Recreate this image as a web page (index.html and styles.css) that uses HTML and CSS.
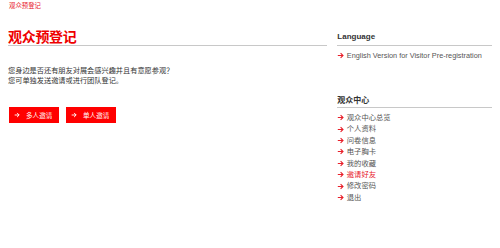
FILE: index.html
```html
<!DOCTYPE html>
<html lang="zh-CN">
<head>
  <meta charset="UTF-8">
  <title>观众预登记</title>
  <link rel="stylesheet" href="styles.css">
</head>
<body>
  <div class="crumb"><a href="#">观众预登记</a></div>
  <div class="layout">
    <div class="main">
      <h1>观众预登记</h1>
      <p class="intro">您身边是否还有朋友对展会感兴趣并且有意愿参观？<br>您可单独发送邀请或进行团队登记。</p>
      <div class="actions">
        <a class="btn" href="#"><svg viewBox="0 0 7 7"><path d="M0.8 3.5h5.2M3.6 1.1l2.4 2.4-2.4 2.4"/></svg>多人邀请</a>
        <a class="btn" href="#"><svg viewBox="0 0 7 7"><path d="M0.8 3.5h5.2M3.6 1.1l2.4 2.4-2.4 2.4"/></svg>单人邀请</a>
      </div>
    </div>
    <div class="side">
      <h3>Language</h3>
      <ul class="links">
        <li><a href="#"><svg viewBox="0 0 7 7"><path d="M0.8 3.5h5.2M3.6 1.1l2.4 2.4-2.4 2.4"/></svg>English Version for Visitor Pre-registration</a></li>
      </ul>
      <h3 class="second">观众中心</h3>
      <ul class="links menu">
        <li><a href="#"><svg viewBox="0 0 7 7"><path d="M0.8 3.5h5.2M3.6 1.1l2.4 2.4-2.4 2.4"/></svg>观众中心总览</a></li>
        <li><a href="#"><svg viewBox="0 0 7 7"><path d="M0.8 3.5h5.2M3.6 1.1l2.4 2.4-2.4 2.4"/></svg>个人资料</a></li>
        <li><a href="#"><svg viewBox="0 0 7 7"><path d="M0.8 3.5h5.2M3.6 1.1l2.4 2.4-2.4 2.4"/></svg>问卷信息</a></li>
        <li><a href="#"><svg viewBox="0 0 7 7"><path d="M0.8 3.5h5.2M3.6 1.1l2.4 2.4-2.4 2.4"/></svg>电子胸卡</a></li>
        <li><a href="#"><svg viewBox="0 0 7 7"><path d="M0.8 3.5h5.2M3.6 1.1l2.4 2.4-2.4 2.4"/></svg>我的收藏</a></li>
        <li class="active"><a href="#"><svg viewBox="0 0 7 7"><path d="M0.8 3.5h5.2M3.6 1.1l2.4 2.4-2.4 2.4"/></svg>邀请好友</a></li>
        <li><a href="#"><svg viewBox="0 0 7 7"><path d="M0.8 3.5h5.2M3.6 1.1l2.4 2.4-2.4 2.4"/></svg>修改密码</a></li>
        <li><a href="#"><svg viewBox="0 0 7 7"><path d="M0.8 3.5h5.2M3.6 1.1l2.4 2.4-2.4 2.4"/></svg>退出</a></li>
      </ul>
    </div>
  </div>
</body>
</html>
```

FILE: styles.css
```css
body {
  margin: 0;
  padding: 0 8px;
  font-family: "Liberation Sans", "Noto Sans CJK SC", sans-serif;
  color: #444;
  background: #fff;
}
a {
  text-decoration: none;
}
.crumb {
  height: 12px;
  font-size: 6.4px;
  line-height: 12px;
  padding-left: 1px;
}
.crumb a {
  color: #e8202a;
}
.layout {
  display: flex;
  gap: 10px;
  padding-top: 17px;
}
.main {
  width: 320px;
}
h1 {
  margin: 0;
  font-size: 14px;
  line-height: 16px;
  color: #ee0000;
  font-weight: bold;
  letter-spacing: -0.3px;
  border-bottom: 1px solid #c8c8c8;
}
.intro {
  margin: 20px 0 0;
  font-size: 7.2px;
  line-height: 10px;
  color: #333;
}
.actions {
  display: flex;
  gap: 7px;
  margin-top: 21px;
  padding-left: 1px;
}
.btn {
  display: flex;
  align-items: center;
  gap: 6px;
  width: 50px;
  height: 16px;
  padding-left: 5px;
  box-sizing: border-box;
  background: #f00;
  color: #fff;
  font-size: 6.6px;
}
.btn svg {
  width: 6px;
  height: 6px;
  fill: none;
  stroke: #fff;
  stroke-width: 1.1;
}
.side {
  width: 155px;
  padding-top: 2px;
}
h3 {
  margin: 0;
  font-size: 8px;
  line-height: 12px;
  padding-bottom: 2px;
  color: #333;
  font-weight: bold;
  border-bottom: 1px solid #c8c8c8;
}
h3.second {
  margin-top: 34px;
  padding-bottom: 0;
}
.links {
  list-style: none;
  margin: 4px 0 0;
  padding: 0;
  font-size: 7.3px;
  line-height: 11px;
}
.menu {
  line-height: 11.4px;
}
.links a {
  display: flex;
  align-items: center;
  gap: 2.5px;
  color: #555;
}
.links svg {
  width: 7px;
  height: 7px;
  fill: none;
  stroke: #e8202a;
  stroke-width: 1.1;
}
.links .active a {
  color: #e8202a;
}
```
